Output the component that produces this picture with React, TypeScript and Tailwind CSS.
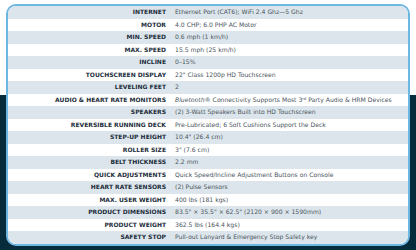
import type { ReactNode } from "react";

type Spec = { label: string; value: ReactNode };

const specs: Spec[] = [
  { label: "Internet", value: "Ethernet Port (CAT6); WiFi 2.4 Ghz—5 Ghz" },
  { label: "Motor", value: "4.0 CHP; 6.0 PHP AC Motor" },
  { label: "Min. Speed", value: "0.6 mph (1 km/h)" },
  { label: "Max. Speed", value: "15.5 mph (25 km/h)" },
  { label: "Incline", value: "0–15%" },
  { label: "Touchscreen Display", value: "22\" Class 1200p HD Touchscreen" },
  { label: "Leveling Feet", value: "2" },
  {
    label: "Audio & Heart Rate Monitors",
    value: (
      <>
        <span className="italic">Bluetooth®</span> Connectivity Supports Most 3
        <sup className="text-[3.8px]">rd</sup> Party Audio &amp; HRM Devices
      </>
    ),
  },
  { label: "Speakers", value: "(2) 3-Watt Speakers Built into HD Touchscreen" },
  { label: "Reversible Running Deck", value: "Pre-Lubricated; 6 Soft Cushions Support the Deck" },
  { label: "Step-Up Height", value: "10.4\" (26.4 cm)" },
  { label: "Roller Size", value: "3\" (7.6 cm)" },
  { label: "Belt Thickness", value: "2.2 mm" },
  { label: "Quick Adjustments", value: "Quick Speed/Incline Adjustment Buttons on Console" },
  { label: "Heart Rate Sensors", value: "(2) Pulse Sensors" },
  { label: "Max. User Weight", value: "400 lbs (181 kgs)" },
  { label: "Product Dimensions", value: "83.5\" × 35.5\" × 62.5\" (2120 × 900 × 1590mm)" },
  { label: "Product Weight", value: "362.5 lbs (164.4 kgs)" },
  { label: "Safety Stop", value: "Pull-out Lanyard & Emergency Stop Safety key" },
];

export default function App() {
  return (
    <div className="h-[250px] w-[416px] pt-[4px] px-[6px] bg-[linear-gradient(to_bottom,#ffffff_95px,#062b3b_95px)] font-['DejaVu_Sans',sans-serif]">
      {/* spec card */}
      <div className="overflow-hidden rounded-[10px] border-2 border-[#6cb6e2] bg-white">
        {specs.map((s, i) => (
          <div
            key={s.label}
            className={`flex h-[12.5px] items-center ${i % 2 === 0 ? "bg-[#dce5eb]" : "bg-white"}`}
          >
            <div className="w-[158px] shrink-0 text-right text-[6px] font-bold uppercase leading-none text-[#1d2d3c]">
              {s.label}
            </div>
            <div className="pl-[9px] text-[6.1px] leading-none whitespace-nowrap text-[#4a5560]">
              {s.value}
            </div>
          </div>
        ))}
      </div>
    </div>
  );
}
